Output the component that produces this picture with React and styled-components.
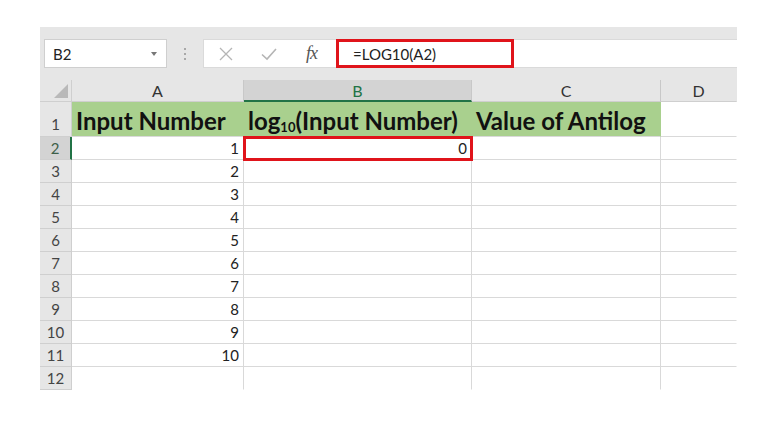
import React from "react";
import styled, { createGlobalStyle } from "styled-components";

const Global = createGlobalStyle`
  body {
    margin: 0;
    background: #fff;
    font-family: Lato, "Open Sans", sans-serif;
  }
`;

const Frame = styled.div`
  padding: 27px 0 0 40px;
  width: 697px;
`;

const Toolbar = styled.div`
  background: #e6e6e6;
  height: 53px;
  display: flex;
  align-items: flex-start;
  padding: 12px 0 0 4px;
  box-sizing: border-box;
`;

const NameBox = styled.div`
  width: 123px;
  height: 29px;
  box-sizing: border-box;
  background: #fff;
  border: 1px solid #cfcfcf;
  display: flex;
  align-items: center;
  justify-content: space-between;
  padding: 0 9px 0 8px;
  font-size: 15px;
  color: #222;
`;

const Caret = styled.span`
  width: 0;
  height: 0;
  border-left: 3px solid transparent;
  border-right: 3px solid transparent;
  border-top: 4px solid #777;
`;

const Dots = styled.div`
  width: 36px;
  height: 29px;
  display: flex;
  flex-direction: column;
  align-items: center;
  justify-content: center;
  gap: 3px;
  span {
    width: 2px;
    height: 2px;
    background: #a8a8a8;
  }
`;

const FormulaBar = styled.div`
  flex: 1;
  height: 29px;
  box-sizing: border-box;
  background: #fff;
  border: 1px solid #dadada;
  border-right: none;
  display: flex;
  align-items: center;
`;

const IconSlot = styled.div`
  width: 43px;
  height: 27px;
  display: flex;
  align-items: center;
  justify-content: center;
  color: ${(p) => p.$color || "#b5b5b5"};
`;

const Fx = styled.span`
  font-family: "Liberation Serif", serif;
  font-style: italic;
  font-size: 18px;
  color: #555;
  letter-spacing: -1px;
`;

const FormulaInput = styled.div`
  margin-left: 3px;
  width: 178px;
  height: 29px;
  box-sizing: border-box;
  border: 3px solid #e0141b;
  display: flex;
  align-items: center;
  padding-left: 14px;
  font-size: 15px;
  color: #222;
`;

const Sheet = styled.div`
  display: grid;
  grid-template-columns: 32px 172px 228px 189px 76px;
  grid-template-rows: 22px 35px repeat(11, 23px);
`;

const Corner = styled.div`
  background: #e6e6e6;
  border-right: 1px solid #cfcfcf;
  border-bottom: 1px solid #cfcfcf;
  position: relative;
  &::after {
    content: "";
    position: absolute;
    right: 3px;
    bottom: 3px;
    border-left: 14px solid transparent;
    border-bottom: 14px solid #b9b9b9;
  }
`;

const ColHead = styled.div`
  background: ${(p) => (p.$active ? "#d3d3d3" : "#e6e6e6")};
  border-right: 1px solid ${(p) => (p.$last ? "#e6e6e6" : "#c8c8c8")};
  border-bottom: ${(p) => (p.$active ? "2px solid #217346" : "1px solid #cfcfcf")};
  color: ${(p) => (p.$active ? "#217346" : "#333")};
  font-size: 16px;
  display: flex;
  align-items: center;
  justify-content: center;
`;

const RowHead = styled.div`
  background: ${(p) => (p.$active ? "#d3d3d3" : "#e6e6e6")};
  border-right: ${(p) => (p.$active ? "2px solid #217346" : "1px solid #cfcfcf")};
  border-bottom: 1px solid #cfcfcf;
  color: ${(p) => (p.$active ? "#3e5f49" : "#444")};
  font-size: 15px;
  display: flex;
  align-items: ${(p) => (p.$tall ? "flex-end" : "center")};
  padding-bottom: ${(p) => (p.$tall ? "3px" : "0")};
  justify-content: center;
`;

const Cell = styled.div`
  border-right: 1px solid ${(p) => (p.$last ? "#fff" : "#d9d9d9")};
  border-bottom: 1px solid ${(p) => (p.$bottom ? "#fff" : "#d9d9d9")};
  font-size: 15px;
  color: #222;
  display: flex;
  align-items: center;
  justify-content: flex-end;
  padding: 0 4px;
  position: relative;
  ${(p) =>
    p.$selected &&
    `
    outline: 3px solid #e0141b;
    outline-offset: -2px;
    z-index: 2;
  `}
`;

const HeadCell = styled.div`
  background: ${(p) => (p.$green ? "#a9d08e" : "#fff")};
  border-right: 1px solid ${(p) => (p.$green ? "#a9d08e" : p.$last ? "#fff" : "#d9d9d9")};
  border-bottom: 1px solid #d9d9d9;
  font-weight: 700;
  font-size: 24px;
  color: #111;
  display: flex;
  align-items: flex-end;
  padding: 0 0 1px 4px;
  white-space: nowrap;
  small {
    font-size: 13px;
  }
`;

const cols = ["A", "B", "C", "D"];

export default function App() {
  const rows = [];
  for (let r = 2; r <= 12; r++) {
    const v = r <= 11 ? r - 1 : "";
    rows.push(
      <React.Fragment key={r}>
        <RowHead $active={r === 2}>{r}</RowHead>
        <Cell $bottom={r === 12}>{v}</Cell>
        <Cell $bottom={r === 12} $selected={r === 2}>{r === 2 ? 0 : ""}</Cell>
        <Cell $bottom={r === 12} />
        <Cell $bottom={r === 12} $last />
      </React.Fragment>
    );
  }
  return (
    <>
      <Global />
      <Frame>
        <Toolbar>
          <NameBox>
            B2
            <Caret />
          </NameBox>
          <Dots>
            <span />
            <span />
            <span />
          </Dots>
          <FormulaBar>
            <IconSlot>
              <svg width="14" height="14" viewBox="0 0 14 14">
                <path d="M1 1 L13 13 M13 1 L1 13" stroke="currentColor" strokeWidth="1.3" fill="none" />
              </svg>
            </IconSlot>
            <IconSlot>
              <svg width="16" height="14" viewBox="0 0 16 14">
                <path d="M1 7.5 L6 12 L15 2" stroke="currentColor" strokeWidth="1.6" fill="none" />
              </svg>
            </IconSlot>
            <IconSlot $color="#555">
              <Fx>fx</Fx>
            </IconSlot>
            <FormulaInput>=LOG10(A2)</FormulaInput>
          </FormulaBar>
        </Toolbar>
        <Sheet>
          <Corner />
          {cols.map((c, i) => (
            <ColHead key={c} $active={c === "B"} $last={i === 3}>
              {c}
            </ColHead>
          ))}
          <RowHead $tall>1</RowHead>
          <HeadCell $green>Input Number</HeadCell>
          <HeadCell $green>
            log<small>10</small>(Input Number)
          </HeadCell>
          <HeadCell $green>Value of Antilog</HeadCell>
          <HeadCell $last />
          {rows}
        </Sheet>
      </Frame>
    </>
  );
}
